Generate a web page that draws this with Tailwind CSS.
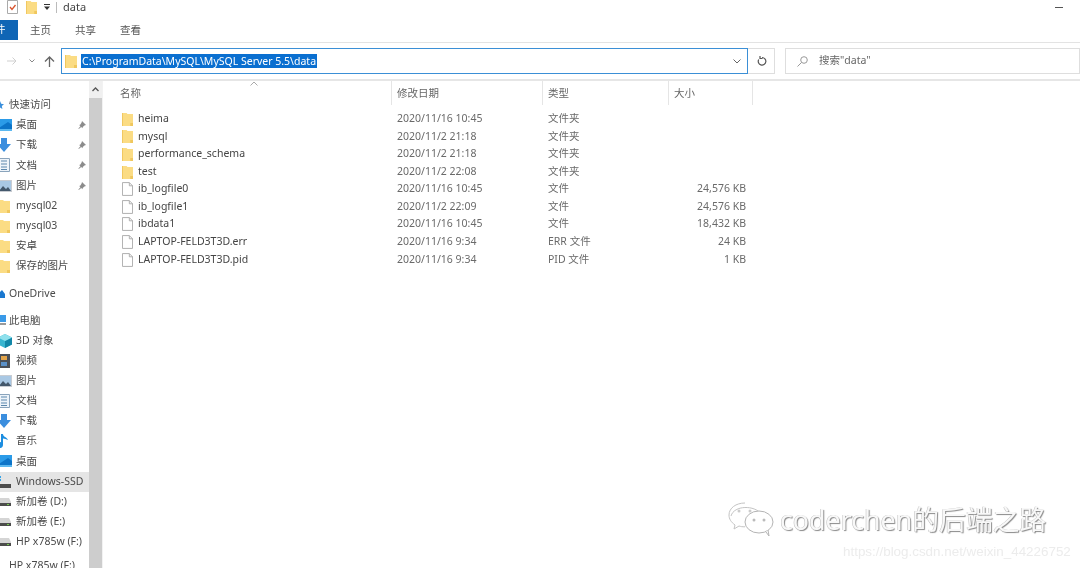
<!DOCTYPE html>
<html lang="en">
<head>
    <meta charset="UTF-8">
    <title>data</title>
    <script src="https://cdn.jsdelivr.net/npm/@tailwindcss/browser@4"></script>
</head>
<body class="bg-white">
    <svg class="hidden">
        <symbol id="folder" viewBox="0 0 12 14" preserveAspectRatio="none"><path d="M0 1h5l1 1h6v12H0z" fill="#fbdc84"/><path d="M0 1h1v13H0zM9 11h3v3H9z" fill="#f0c75e"/></symbol>
        <symbol id="file" viewBox="0 0 12 15"><path d="M.5.5h7.5l3.500 3.500v10.500H.5z" fill="#fff" stroke="#a8a8a8"/><path d="M8 .5v3.500h3.500" fill="none" stroke="#a8a8a8"/></symbol>
        <symbol id="desk" viewBox="0 0 16 12"><path d="M0 0h16v11H0z" fill="#2b9be8"/><path d="M0 11L12 3l4 3v5z" fill="#0c74c8"/><path d="M0 10h16v2H0z" fill="#5bb8f0"/></symbol>
        <symbol id="down" viewBox="0 0 14 14"><path d="M4 0h6v6h4l-7 8-7-8h4z" fill="#3b8ede"/></symbol>
        <symbol id="doc" viewBox="0 0 12 14"><path d="M.5.500h11v13H.5z" fill="#eef4fa" stroke="#8aa4bc"/><path d="M3 3h6M3 6h6M3 9h6M3 11.500h6" stroke="#5c88ad"/></symbol>
        <symbol id="pic" viewBox="0 0 14 12"><path d="M0 0h14v12H0z" fill="#c8ccd2"/><path d="M1 1h12v10H1z" fill="#a9c8e4"/><path d="M1 11l4-5 3 3 2-2 3 4z" fill="#44586c"/></symbol>
        <symbol id="pin" viewBox="0 0 10 10"><path d="M5 0l5 5-2 .5-2 2-.5 1.500-1.500-1.500L1 10l-.5-.5 2.500-3L1.500 5 3 4.500l1.500-2.500z" fill="#8c8c8c"/></symbol>
        <symbol id="drive" viewBox="0 0 14 8"><path d="M2 0h10l2 4v4H0V4z" fill="#d5d5d5"/><path d="M0 5h14v3H0z" fill="#4c4c4c"/><path d="M10 6h2v1h-2z" fill="#74d04c"/></symbol>
    </svg>

    <div class="relative w-[1080px] h-[568px] overflow-hidden flex flex-col bg-white text-[#4a4a4a] text-[10.500px] [font-family:'Noto_Sans','Noto_Sans_CJK_SC',sans-serif] [filter:blur(0.4px)]">

        <!-- Title bar -->
        <div class="h-5 shrink-0 pb-[6px] flex items-center text-[#444]">
            <svg class="ml-[7px] w-[11px] h-[14px]" viewBox="0 0 11 14"><path d="M.5.500h10v13H.5z" fill="#fff" stroke="#aaa"/><path d="M3 7l2 2.500L8.500 5" fill="none" stroke="#d9532c" stroke-width="1.300"/></svg>
            <svg class="ml-[8px] w-[11px] h-[14px]"><use href="#folder"/></svg>
            <svg class="ml-[7px] w-[6px] h-[6px]" viewBox="0 0 6 6"><path d="M0 0h6v1H0zM0 2.500h6L3 6z" fill="#333"/></svg>
            <div class="ml-[6px] w-px h-[11px] bg-[#bbb]"></div>
            <span class="ml-[6px] text-[11px]">data</span>
            <div class="ml-auto mr-[17px] w-2 h-px bg-[#555]"></div>
        </div>

        <!-- Ribbon tabs -->
        <div class="h-[23px] shrink-0 flex items-center border-b border-[#e3e3e3] text-[#555]">
            <div class="w-[18px] h-[20px] -mt-[3px] bg-[#0f65b5] text-white flex items-center overflow-hidden"><span class="-ml-[5px]">件</span></div>
            <span class="ml-[12px]">主页</span>
            <span class="ml-[24px]">共享</span>
            <span class="ml-[24px]">查看</span>
        </div>

        <!-- Address row -->
        <div class="h-[38px] shrink-0 flex items-center border-b-2 border-[#e6e6e6] text-[#555]">
            <svg class="ml-[7px] w-[10px] h-[10px]" viewBox="0 0 10 10"><path d="M0 5h9M5.500 1.500L9 5 5.500 8.500" fill="none" stroke="#cfcfcf"/></svg>
            <svg class="ml-[12px] w-[6px] h-[4px]" viewBox="0 0 6 4"><path d="M.5.500L3 3 5.500.500" fill="none" stroke="#888"/></svg>
            <svg class="ml-[9px] w-[11px] h-[11px]" viewBox="0 0 11 11"><path d="M5.500 11V1M1 5.500L5.500 1 10 5.500" fill="none" stroke="#666" stroke-width="1.300"/></svg>
            <div class="ml-[6px] w-[687px] h-[26px] flex items-center border border-[#3b8fd6]">
                <svg class="ml-[3px] w-[12px] h-[14px]"><use href="#folder"/></svg>
                <span class="ml-[4px] px-px bg-[#0a6fd0] text-white text-[10.500px] leading-[14px]">C:\ProgramData\MySQL\MySQL Server 5.5\data</span>
                <svg class="ml-auto mr-[6px] w-[8px] h-[5px]" viewBox="0 0 8 5"><path d="M.5.500L4 4 7.500.500" fill="none" stroke="#666"/></svg>
            </div>
            <div class="w-[27px] h-[26px] pl-[2px] flex items-center justify-center border border-l-0 border-[#dedede]">
                <svg class="w-[10px] h-[10px]" viewBox="0 0 10 10"><path d="M5 1.500a3.800 3.800 0 1 1-3.300 2M3 0v2.500h2.500" fill="none" stroke="#555" stroke-width="1.200"/></svg>
            </div>
            <div class="ml-[10px] grow h-[26px] flex items-center border border-[#dedede] text-[#666]">
                <svg class="ml-[11px] w-[11px] h-[11px]" viewBox="0 0 11 11"><circle cx="7" cy="4" r="3.300" fill="none" stroke="#999"/><path d="M4.500 6.500L.5 10.500" stroke="#999"/></svg>
                <span class="ml-[11px]">搜索"data"</span>
            </div>
        </div>

        <div class="flex grow min-h-0">
            <!-- Navigation pane -->
            <nav class="w-[89px] shrink-0 pt-[14px] overflow-hidden">
                <div class="h-[20.150px] flex items-center gap-[6px] -ml-1"><svg class="w-[8px] h-[8px]" viewBox="0 0 10 10"><path d="M5 0l1.500 3.500L10 4 7.300 6.300 8 10 5 8 2 10l.7-3.700L0 4l3.500-.5z" fill="#3a8fdc"/></svg><span class="ml-[-1px]">快速访问</span></div>
                <div class="h-[20.150px] flex items-center relative"><svg class="w-4 h-3 -ml-1 mr-1"><use href="#desk"/></svg>桌面<svg class="absolute right-[3px] w-2 h-2"><use href="#pin"/></svg></div>
                <div class="h-[20.150px] flex items-center relative"><svg class="w-4 h-[14px] -ml-1 mr-1"><use href="#down"/></svg>下载<svg class="absolute right-[3px] w-2 h-2"><use href="#pin"/></svg></div>
                <div class="h-[20.150px] flex items-center relative"><svg class="w-3 h-[14px] -ml-[2px] mr-[6px]"><use href="#doc"/></svg>文档<svg class="absolute right-[3px] w-2 h-2"><use href="#pin"/></svg></div>
                <div class="h-[20.150px] flex items-center relative"><svg class="w-[14px] h-3 -ml-[2px] mr-1"><use href="#pic"/></svg>图片<svg class="absolute right-[3px] w-2 h-2"><use href="#pin"/></svg></div>
                <div class="h-[20.150px] flex items-center"><svg class="w-3 h-[14px] -ml-[2px] mr-[6px]"><use href="#folder"/></svg>mysql02</div>
                <div class="h-[20.150px] flex items-center"><svg class="w-3 h-[14px] -ml-[2px] mr-[6px]"><use href="#folder"/></svg>mysql03</div>
                <div class="h-[20.150px] flex items-center"><svg class="w-3 h-[14px] -ml-[2px] mr-[6px]"><use href="#folder"/></svg>安卓</div>
                <div class="h-[20.150px] flex items-center whitespace-nowrap"><svg class="w-3 h-[14px] -ml-[2px] mr-[6px]"><use href="#folder"/></svg>保存的图片</div>
                <div class="mt-2 h-[20.150px] flex items-center pl-[9px] relative"><svg class="absolute -left-[2px] w-[7px] h-[8px]" viewBox="0 0 7 8"><path d="M0 8V4l4-4 3 4v4z" fill="#1a78d0"/></svg>OneDrive</div>
                <div class="mt-[6px] h-[20.150px] flex items-center pl-[9px] relative"><svg class="absolute -left-[2px] w-[8px] h-[10px]" viewBox="0 0 8 10"><path d="M0 0h8v7H0z" fill="#3a9ae8"/><path d="M1 8h7v2H1z" fill="#9a9a9a"/></svg>此电脑</div>
                <div class="h-[20.150px] flex items-center"><svg class="w-[14px] h-[14px] -ml-[2px] mr-1" viewBox="0 0 14 14"><path d="M7 0l7 3.500v7L7 14l-7-3.500v-7z" fill="#38b5d0"/><path d="M7 7l7-3.500v7L7 14z" fill="#1287a8"/><path d="M7 0l7 3.500L7 7 0 3.500z" fill="#8fe0ec"/></svg>3D 对象</div>
                <div class="h-[20.150px] flex items-center"><svg class="w-3 h-[14px] -ml-[2px] mr-[6px]" viewBox="0 0 12 14"><path d="M0 0h12v14H0z" fill="#4a4f57"/><path d="M3 2h6v4H3z" fill="#e2a44a"/><path d="M3 8h6v4H3z" fill="#5a90c8"/></svg>视频</div>
                <div class="h-[20.150px] flex items-center"><svg class="w-[14px] h-3 -ml-[2px] mr-1"><use href="#pic"/></svg>图片</div>
                <div class="h-[20.150px] flex items-center"><svg class="w-3 h-[14px] -ml-[2px] mr-[6px]"><use href="#doc"/></svg>文档</div>
                <div class="h-[20.150px] flex items-center"><svg class="w-4 h-[14px] -ml-1 mr-1"><use href="#down"/></svg>下载</div>
                <div class="h-[20.150px] flex items-center"><svg class="w-[10px] h-[14px] mr-[6px]" viewBox="0 0 10 14"><path d="M3 0h2c0 3 4 3 5 6-2-1-3-1-5-1.500V11a3 3 0 1 1-2-2.800z" fill="#1d8ee0" transform="translate(-2 0)"/></svg>音乐</div>
                <div class="h-[20.150px] flex items-center"><svg class="w-4 h-3 -ml-1 mr-1"><use href="#desk"/></svg>桌面</div>
                <div class="h-[20.150px] flex items-center bg-[#e5e5e5]"><svg class="w-[14px] h-[12px] -ml-[3px] mr-[5px]" viewBox="0 0 14 12"><path d="M0 0h4v2H0zM0 3h4v2H0z" fill="#35a4e8"/><path d="M0 8h14v4H0z" fill="#4c4c4c"/></svg>Windows-SSD</div>
                <div class="h-[20.150px] flex items-center"><svg class="w-[14px] h-2 -ml-[3px] mr-[5px]"><use href="#drive"/></svg>新加卷 (D:)</div>
                <div class="h-[20.150px] flex items-center"><svg class="w-[14px] h-2 -ml-[3px] mr-[5px]"><use href="#drive"/></svg>新加卷 (E:)</div>
                <div class="h-[20.150px] flex items-center whitespace-nowrap"><svg class="w-[14px] h-2 -ml-[3px] mr-[5px]"><use href="#drive"/></svg>HP x785w (F:)</div>
                <div class="mt-[4px] h-5 flex items-center pl-[9px] whitespace-nowrap">HP x785w (F:)</div>
            </nav>

            <!-- Scrollbar -->
            <div class="w-[13px] shrink-0 bg-[#cdcdcd] relative">
                <div class="h-[17px] bg-[#f0f0f0] flex items-center justify-center"><svg class="w-[7px] h-[5px]" viewBox="0 0 7 5"><path d="M.5 4L3.500 1 6.500 4" fill="none" stroke="#555" stroke-width="1.300"/></svg></div>
            </div>

            <!-- File list -->
            <main class="grow pl-[17px] border-l border-[#f2f2f2] relative">
                <svg class="absolute left-[147px] top-[0px] w-[8px] h-[5px]" viewBox="0 0 8 5"><path d="M.5 4.500L4 1l3.500 3.500" fill="none" stroke="#aaa"/></svg>
                <div class="flex h-[24px] text-[#666]">
                    <div class="w-[272px] pt-[5px] border-r border-[#e5e5e5]">名称</div>
                    <div class="w-[151px] pl-[5px] pt-[5px] border-r border-[#e5e5e5]">修改日期</div>
                    <div class="w-[126px] pl-[5px] pt-[5px] border-r border-[#e5e5e5]">类型</div>
                    <div class="w-[84px] pl-[5px] pt-[5px] border-r border-[#e5e5e5]">大小</div>
                </div>
                <div class="h-[5px]"></div>
                <div class="grid grid-cols-[272px_151px_126px_77px] auto-rows-[17.600px] items-center text-[#6a6a6a]">
                    <div class="flex items-center text-[#444]"><svg class="ml-[2px] w-[11px] h-[14px] mr-[5px]"><use href="#folder"/></svg>heima</div><div class="pl-[5px]">2020/11/16 10:45</div><div class="pl-[5px]">文件夹</div><div class="text-right"></div>
                    <div class="flex items-center text-[#444]"><svg class="ml-[2px] w-[11px] h-[14px] mr-[5px]"><use href="#folder"/></svg>mysql</div><div class="pl-[5px]">2020/11/2 21:18</div><div class="pl-[5px]">文件夹</div><div class="text-right"></div>
                    <div class="flex items-center text-[#444]"><svg class="ml-[2px] w-[11px] h-[14px] mr-[5px]"><use href="#folder"/></svg>performance_schema</div><div class="pl-[5px]">2020/11/2 21:18</div><div class="pl-[5px]">文件夹</div><div class="text-right"></div>
                    <div class="flex items-center text-[#444]"><svg class="ml-[2px] w-[11px] h-[14px] mr-[5px]"><use href="#folder"/></svg>test</div><div class="pl-[5px]">2020/11/2 22:08</div><div class="pl-[5px]">文件夹</div><div class="text-right"></div>
                    <div class="flex items-center text-[#444]"><svg class="ml-[2px] w-[11px] h-[14px] mr-[5px]"><use href="#file"/></svg>ib_logfile0</div><div class="pl-[5px]">2020/11/16 10:45</div><div class="pl-[5px]">文件</div><div class="text-right">24,576 KB</div>
                    <div class="flex items-center text-[#444]"><svg class="ml-[2px] w-[11px] h-[14px] mr-[5px]"><use href="#file"/></svg>ib_logfile1</div><div class="pl-[5px]">2020/11/2 22:09</div><div class="pl-[5px]">文件</div><div class="text-right">24,576 KB</div>
                    <div class="flex items-center text-[#444]"><svg class="ml-[2px] w-[11px] h-[14px] mr-[5px]"><use href="#file"/></svg>ibdata1</div><div class="pl-[5px]">2020/11/16 10:45</div><div class="pl-[5px]">文件</div><div class="text-right">18,432 KB</div>
                    <div class="flex items-center text-[#444]"><svg class="ml-[2px] w-[11px] h-[14px] mr-[5px]"><use href="#file"/></svg>LAPTOP-FELD3T3D.err</div><div class="pl-[5px]">2020/11/16 9:34</div><div class="pl-[5px]">ERR 文件</div><div class="text-right">24 KB</div>
                    <div class="flex items-center text-[#444]"><svg class="ml-[2px] w-[11px] h-[14px] mr-[5px]"><use href="#file"/></svg>LAPTOP-FELD3T3D.pid</div><div class="pl-[5px]">2020/11/16 9:34</div><div class="pl-[5px]">PID 文件</div><div class="text-right">1 KB</div>
                </div>
            </main>
        </div>

        <!-- Watermark -->
        <div class="absolute left-[728px] top-[502px] flex items-center">
            <svg class="w-[46px] h-[36px]" viewBox="0 0 46 36"><path d="M17 1C8 1 1 6 1 13c0 4 2 7 6 10l-1 4 5-3c2 .6 3 .8 6 .8M33 12C27 3 6 3 3 14" fill="#fff" stroke="#c4c4c4" stroke-width="1"/><ellipse cx="31" cy="20" rx="14" ry="11" fill="#fff" stroke="#b4b4b4"/><path d="M38 30l3 4-1-6" fill="#fff" stroke="#b4b4b4"/><circle cx="11" cy="9" r="1.500" fill="#ccc"/><circle cx="22" cy="9" r="1.500" fill="#ccc"/><circle cx="26" cy="18" r="1.500" fill="#bbb"/><circle cx="36" cy="18" r="1.500" fill="#bbb"/></svg>
            <span class="ml-[6px] text-[26.800px] leading-none text-[#f8f8f8] [text-shadow:1px_1px_1px_#8a8a8a,-0.500px_-0.500px_0_#bdbdbd] whitespace-nowrap">coderchen的后端之路</span>
        </div>
        <span class="absolute left-[843px] top-[544px] text-[13.400px] leading-4 text-[#ececec] whitespace-nowrap [font-family:'Liberation_Sans',sans-serif]">https://blog.csdn.net/weixin_44226752</span>
    </div>
</body>
</html>
